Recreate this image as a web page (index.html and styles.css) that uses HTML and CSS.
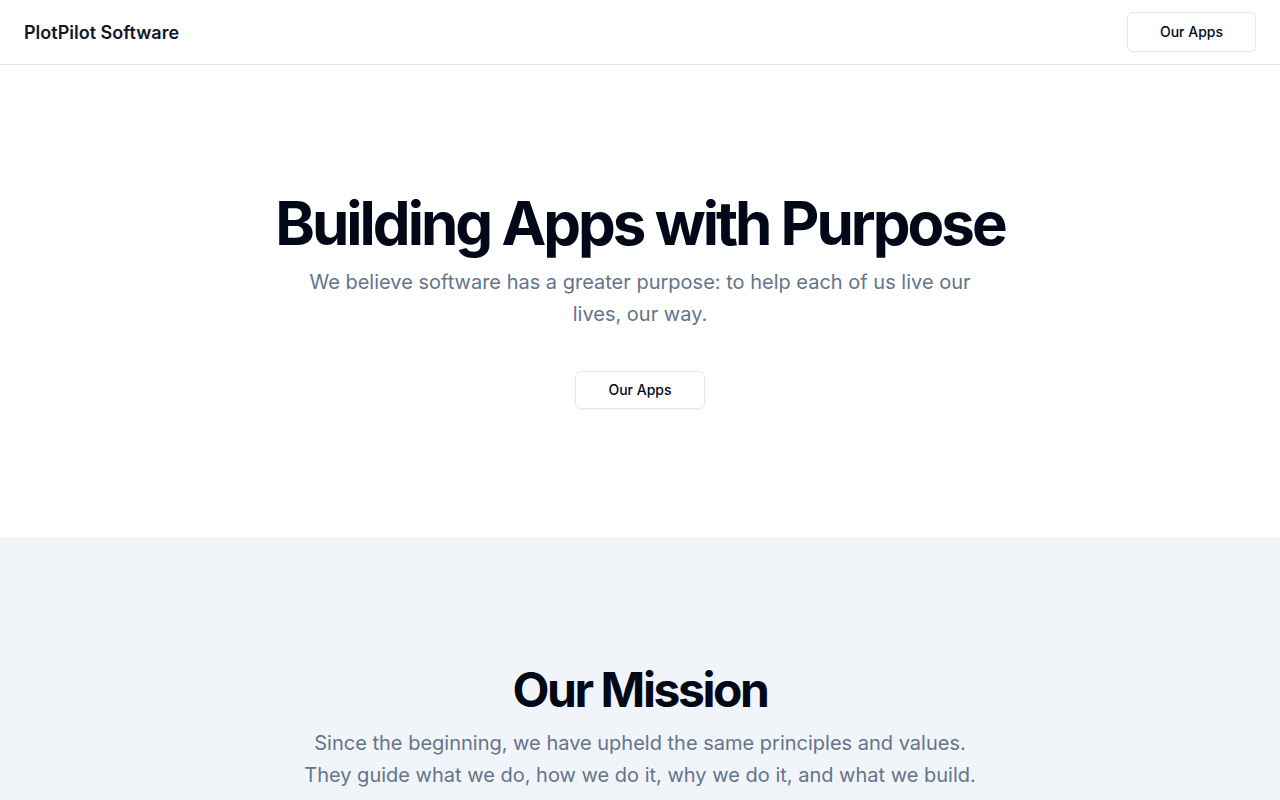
FILE: index.html
```html
<!DOCTYPE html>
<html lang="en">
<head>
<meta charset="utf-8">
<title>PlotPilot Software</title>
<link rel="stylesheet" href="styles.css">
</head>
<body>
<header class="site-header">
  <a class="brand" href="#">PlotPilot Software</a>
  <a class="btn" href="#">Our Apps</a>
</header>
<main>
  <section class="hero">
    <div class="hero-text">
      <h1 class="hero-title">Building Apps with Purpose</h1>
      <p class="lead">We believe software has a greater purpose: to help each of us live our lives, our way.</p>
    </div>
    <a class="btn" href="#">Our Apps</a>
  </section>
  <section class="mission">
    <h2 class="mission-title">Our Mission</h2>
    <p class="lead">Since the beginning, we have upheld the same principles and values. They guide what we do, how we do it, why we do it, and what we build.</p>
  </section>
</main>
</body>
</html>
```
FILE: styles.css
```css
* { box-sizing: border-box; }
html, body { margin: 0; padding: 0; }
body {
  font-family: Inter, "Noto Sans", sans-serif;
  color: #020817;
  background: #ffffff;
}
a { text-decoration: none; color: inherit; }

.site-header {
  height: 65px;
  display: flex;
  align-items: center;
  justify-content: space-between;
  padding: 0 24px;
  border-bottom: 1px solid #e2e8f0;
}
.brand {
  font-size: 18px;
  font-weight: 600;
  color: #0f172a;
}
.btn {
  display: inline-flex;
  align-items: center;
  justify-content: center;
  height: 40px;
  padding: 0 32px 1px;
  border: 1px solid #e2e8f0;
  border-radius: 6px;
  background: #ffffff;
  font-size: 14px;
  font-weight: 500;
  color: #020817;
  box-shadow: 0 1px 2px rgba(0, 0, 0, 0.05);
}

.hero {
  display: flex;
  flex-direction: column;
  align-items: center;
  padding: 128px 16px;
  text-align: center;
  height: 472px;
}
.hero-text {
  display: flex;
  flex-direction: column;
  align-items: center;
  gap: 13px;
  margin-bottom: 41px;
}
.hero-title {
  margin: 0;
  font-size: 60px;
  line-height: 1;
  font-weight: 700;
  letter-spacing: -0.05em;
}
.lead {
  margin: 0;
  max-width: 700px;
  font-size: 20px;
  line-height: 32px;
  color: #64748b;
}

.mission {
  background: #f1f5f9;
  display: flex;
  flex-direction: column;
  align-items: center;
  text-align: center;
  padding: 129px 16px 128px;
  gap: 13px;
}
.mission-title {
  margin: 0;
  font-size: 48px;
  line-height: 1;
  font-weight: 700;
  letter-spacing: -0.05em;
}
```
